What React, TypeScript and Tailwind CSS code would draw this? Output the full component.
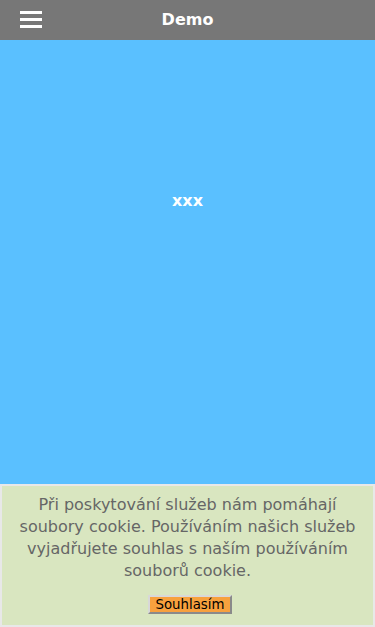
import React from 'react'

export default function App() {
  return (
    <div className="flex h-[627px] w-full flex-col overflow-hidden" style={{ fontFamily: '"DejaVu Sans", sans-serif' }}>
      {/* hlavička */}
      <header className="relative flex h-10 shrink-0 items-center justify-center bg-[#777777]">
        <button className="absolute left-5 top-[11px] flex w-[22px] flex-col gap-[4px]">
          <span className="block h-[3px] w-full bg-white" />
          <span className="block h-[3px] w-full bg-white" />
          <span className="block h-[3px] w-full bg-white" />
        </button>
        <h1 className="text-[16px] font-bold text-white">Demo</h1>
      </header>

      {/* obsah */}
      <main className="flex h-[444px] shrink-0 items-start justify-center bg-[#5ac0ff] pt-[149px]">
        <span className="text-[16px] font-bold text-white">xxx</span>
      </main>

      {/* cookie lišta */}
      <div className="flex flex-1 flex-col items-center border-2 border-[#e8e8e8] bg-[#d9e6c0] px-4 pt-[8px]">
        <p className="text-center text-[16px] leading-[22px] text-[#666666]">
          Při poskytování služeb nám pomáhají soubory cookie. Používáním našich služeb vyjadřujete souhlas s naším používáním souborů cookie.
        </p>
        <button className="ml-[5px] mt-[13px] border-2 border-t-[#d8d8d8] border-l-[#d8d8d8] border-r-[#8a8a8a] border-b-[#8a8a8a] bg-[#f7a13e] px-[5.5px] text-[13.333px] leading-[15px] text-black">
          Souhlasím
        </button>
      </div>
    </div>
  )
}
